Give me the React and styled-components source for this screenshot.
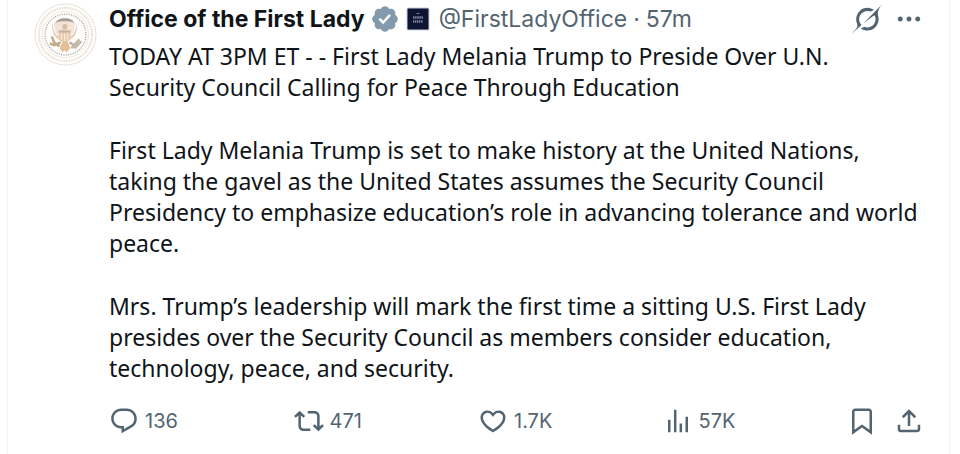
import React from 'react';
import styled, { createGlobalStyle } from 'styled-components';

const paragraphs = [
  'TODAY AT 3PM ET - - First Lady Melania Trump to Preside Over U.N. Security Council Calling for Peace Through Education',
  'First Lady Melania Trump is set to make history at the United Nations, taking the gavel as the United States assumes the Security Council Presidency to emphasize education’s role in advancing tolerance and world peace.',
  'Mrs. Trump’s leadership will mark the first time a sitting U.S. First Lady presides over the Security Council as members consider education, technology, peace, and security.'
];

const icons = {
  reply:
    'M1.751 10c0-4.42 3.584-8 8.005-8h4.366c4.49 0 8.129 3.64 8.129 8.13 0 2.96-1.607 5.68-4.196 7.11l-8.054 4.46v-3.69h-.067c-4.49.1-8.183-3.51-8.183-8.01zm8.005-6c-3.317 0-6.005 2.69-6.005 6 0 3.37 2.77 6.08 6.138 6.01l.351-.01h1.761v2.3l5.087-2.81c1.951-1.08 3.163-3.13 3.163-5.36 0-3.39-2.744-6.13-6.129-6.13H9.756z',
  repost:
    'M4.5 3.88l4.432 4.14-1.364 1.46L5.5 7.55V16c0 1.1.896 2 2 2H13v2H7.5c-2.209 0-4-1.79-4-4V7.55L1.432 9.48.068 8.02 4.5 3.88zM16.5 6H11V4h5.5c2.209 0 4 1.79 4 4v8.45l2.068-1.93 1.364 1.46-4.432 4.14-4.432-4.14 1.364-1.46 2.068 1.93V8c0-1.1-.896-2-2-2z',
  like:
    'M16.697 5.5c-1.222-.06-2.679.51-3.89 2.16l-.805 1.09-.806-1.09C9.984 6.01 8.526 5.44 7.304 5.5c-1.243.07-2.349.78-2.91 1.91-.552 1.12-.633 2.78.479 4.82 1.074 1.97 3.257 4.27 7.129 6.61 3.87-2.34 6.052-4.64 7.126-6.61 1.111-2.04 1.03-3.7.477-4.82-.561-1.13-1.666-1.84-2.908-1.91zm4.187 7.69c-1.351 2.48-4.001 5.12-8.379 7.67l-.503.3-.504-.3c-4.379-2.55-7.029-5.19-8.382-7.67-1.36-2.5-1.41-4.86-.514-6.67.887-1.79 2.647-2.91 4.601-3.01 1.651-.09 3.368.56 4.798 2.01 1.429-1.45 3.146-2.1 4.796-2.01 1.954.1 3.714 1.22 4.601 3.01.896 1.81.846 4.17-.514 6.67z',
  views:
    'M8.75 21V3h2v18h-2zM18 21V8.5h2V21h-2zM4 21l.004-10h2L6 21H4zm9.248 0v-7h2v7h-2z',
  bookmark:
    'M4 4.5C4 3.12 5.119 2 6.5 2h11C18.881 2 20 3.12 20 4.5v18.44l-8-5.71-8 5.71V4.5zM6.5 4c-.276 0-.5.22-.5.5v14.56l6-4.29 6 4.29V4.5c0-.28-.224-.5-.5-.5h-11z',
  share:
    'M12 2.59l5.7 5.7-1.41 1.42L13 6.41V16h-2V6.41l-3.3 3.3-1.41-1.42L12 2.59zM21 15l-.02 3.51c0 1.38-1.12 2.49-2.5 2.49H5.5C4.11 21 3 19.88 3 18.5V15h2v3.5c0 .28.22.5.5.5h12.98c.28 0 .5-.22.5-.5L19 15h2z',
  more:
    'M3 12c0-1.1.9-2 2-2s2 .9 2 2-.9 2-2 2-2-.9-2-2zm9 2c1.1 0 2-.9 2-2s-.9-2-2-2-2 .9-2 2 .9 2 2 2zm7 0c1.1 0 2-.9 2-2s-.9-2-2-2-2 .9-2 2 .9 2 2 2z'
};

const stats = [
  { icon: 'reply', label: 'Reply', count: '136' },
  { icon: 'repost', label: 'Repost', count: '471' },
  { icon: 'like', label: 'Like', count: '1.7K' },
  { icon: 'views', label: 'Views', count: '57K' }
];

const Icon = ({ name }) => (
  <IconSvg viewBox='0 0 24 24' aria-hidden='true'>
    <path d={icons[name]} />
  </IconSvg>
);

const GrokIcon = () => (
  <IconSvg viewBox='0 0 33 32' aria-hidden='true'>
    <path d='M12.745 20.54l10.97-8.19c.539-.4 1.307-.244 1.564.38 1.349 3.288.746 7.241-1.938 9.955-2.683 2.714-6.417 3.31-9.83 1.954l-3.728 1.745c5.347 3.697 11.84 2.782 15.898-1.324 3.219-3.255 4.216-7.692 3.284-11.693l.008.009c-1.351-5.878.332-8.227 3.782-13.031L33 0l-4.54 4.59v-.014L12.743 20.544m-2.263 1.987c-3.837-3.707-3.175-9.446.1-12.755 2.42-2.449 6.388-3.448 9.852-1.979l3.72-1.737c-.67-.49-1.53-1.017-2.515-1.387-4.455-1.854-9.789-.931-13.41 2.728-3.483 3.523-4.579 8.94-2.697 13.561 1.405 3.454-.899 5.898-3.22 8.364C1.49 30.2.666 31.074 0 32l10.478-9.466' />
  </IconSvg>
);

const VerifiedBadge = () => (
  <BadgeSvg viewBox='0 0 22 22' role='img' aria-label='Verified account'>
    <path d='M20.396 11c-.018-.646-.215-1.275-.57-1.816-.354-.54-.852-.972-1.438-1.246.223-.607.27-1.264.14-1.897-.131-.634-.437-1.218-.882-1.687-.47-.445-1.053-.75-1.687-.882-.633-.13-1.29-.083-1.897.14-.273-.587-.704-1.086-1.245-1.44S11.647 1.62 11 1.604c-.646.017-1.273.213-1.813.568s-.969.854-1.24 1.44c-.608-.223-1.267-.272-1.902-.14-.635.13-1.22.436-1.69.882-.445.47-.749 1.055-.878 1.688-.13.633-.08 1.29.144 1.896-.587.274-1.087.705-1.443 1.245-.356.54-.555 1.17-.574 1.817.02.647.218 1.276.574 1.817.356.54.856.972 1.443 1.245-.224.606-.274 1.263-.144 1.896.13.634.433 1.218.877 1.688.47.443 1.054.747 1.687.878.633.132 1.29.084 1.897-.136.274.586.705 1.084 1.246 1.439.54.354 1.17.551 1.816.569.647-.016 1.276-.213 1.817-.567s.972-.854 1.245-1.44c.604.239 1.266.296 1.903.164.636-.132 1.22-.447 1.68-.907.46-.46.776-1.044.908-1.681s.075-1.299-.165-1.903c.586-.274 1.084-.705 1.439-1.246.354-.54.551-1.17.569-1.816zM9.662 14.85l-3.429-3.428 1.293-1.302 2.072 2.072 4.4-4.794 1.347 1.246z' />
  </BadgeSvg>
);

const AffiliateBadge = () => (
  <AffiliateSvg viewBox='0 0 24 24' role='img' aria-label='The White House'>
    <rect x='1' y='1' width='22' height='22' rx='1' fill='#0d1533' stroke='#c9cfdb' />
    <g stroke='#7d8399' fill='none'>
      <path d='M10.5 6.5h3' strokeWidth='1' />
      <path d='M7 10.5h10' strokeWidth='2.5' strokeDasharray='1.5 .6' />
      <path d='M7 14.5h10' strokeWidth='2.5' strokeDasharray='1.3 .6' />
    </g>
  </AffiliateSvg>
);

const Seal = () => (
  <SealSvg viewBox='0 0 64 64' role='img' aria-label='Seal'>
    <circle cx='32' cy='32' r='31' fill='#fffefc' stroke='#dcd8d2' strokeWidth='.8' />
    <g fill='none'>
      <circle cx='32' cy='32' r='27' stroke='#e6dccf' strokeWidth='2.2' strokeDasharray='1.4 1.1' />
      <circle cx='32' cy='32' r='23.5' stroke='#e4ded5' strokeWidth='.7' />
      <circle cx='32' cy='32' r='20.8' stroke='#aaa49c' strokeWidth='1.4' strokeDasharray='1.1 1.3' />
    </g>
    {/* wings and clouds */}
    <path d='M19 20c0 8 2 13 9 15l-1 3c-7-3-10-10-8-18zM43 20c0 8-2 13-9 15l1 3c7-3 10-10 8-18z' fill='#e3cdb8' />
    <path d='M20 21c1-3 5-4 11-4s10 1 11 4l-2 9-5 5h-8l-5-5z' fill='#f1e4d8' />
    <path d='M22 20c3-6 16-6 19 0-5-2-14-2-19 0z' fill='#a39a96' />
    {/* head, shield and tail */}
    <path d='M29 22l3-1 2 2-1 4h-4z' fill='#d9bc9b' />
    <path d='M25 28h12v6c0 4-3 6-6 7-3-1-6-3-6-7z' fill='#eacdb0' />
    <path d='M25 28h12v2H25z' fill='#c5b1a2' />
    <path d='M28 31v6M31 31v8M34 31v6' stroke='#f8eee3' strokeWidth='1' />
    <path d='M29 39h5l3 7-4 4-2-2-2 2-3-4z' fill='#e2bf98' />
    {/* branch and arrows */}
    <path d='M27 40l-7 3M18 34l3 7 5 3M16 41l5 2' fill='none' stroke='#c6a887' strokeWidth='2.5' />
    <path d='M36 40l5 3M38 46l8-9M41 46l7-7' fill='none' stroke='#c4b5a6' strokeWidth='2.5' />
  </SealSvg>
);

const App = () => {
  return (
    <>
      <GlobalStyle />
      <Post>
        <AvatarLink href='#profile'>
          <Seal />
        </AvatarLink>
        <Content>
          <Header>
            <NameLink href='#profile'>Office of the First Lady</NameLink>
            <VerifiedBadge />
            <AffiliateBadge />
            <Meta>
              <MetaLink href='#profile'>@FirstLadyOffice</MetaLink>
              <span>·</span>
              <MetaLink href='#status'>
                <time>57m</time>
              </MetaLink>
            </Meta>
            <HeaderActions>
              <IconButton aria-label='Grok'>
                <GrokIcon />
              </IconButton>
              <IconButton aria-label='More'>
                <Icon name='more' />
              </IconButton>
            </HeaderActions>
          </Header>
          <Body>
            {paragraphs.map((text) => (
              <Paragraph key={text}>{text}</Paragraph>
            ))}
          </Body>
          <ActionBar>
            {stats.map(({ icon, label, count }) => (
              <StatButton key={icon} aria-label={`${count} ${label}`}>
                <Icon name={icon} />
                {count}
              </StatButton>
            ))}
            <EndActions>
              <IconButton aria-label='Bookmark'>
                <Icon name='bookmark' />
              </IconButton>
              <IconButton aria-label='Share'>
                <Icon name='share' />
              </IconButton>
            </EndActions>
          </ActionBar>
        </Content>
      </Post>
    </>
  );
};

export default App;

const GlobalStyle = createGlobalStyle`
  * {
    box-sizing: border-box;
  }

  body {
    margin: 0;
    background-color: #ffffff;
    color: #0f1419;
    font-family: Inter, 'Liberation Sans', sans-serif;
    font-size: 23px;
  }

  a {
    color: inherit;
    text-decoration: none;
  }
`;

const Post = styled.article`
  display: flex;
  gap: 12px;
  min-height: 100vh;
  margin: 0 10px 0 7px;
  padding: 3px 25px 0 26px;
  border: solid #eff3f4;
  border-width: 0 1px;
`;

const AvatarLink = styled.a`
  flex-shrink: 0;
`;

const SealSvg = styled.svg`
  display: block;
  width: 63px;
  height: 63px;
`;

const Content = styled.div`
  flex: 1;
  min-width: 0;
`;

const Header = styled.header`
  display: flex;
  align-items: center;
  height: 32px;
`;

const NameLink = styled.a`
  font-weight: 700;
  white-space: nowrap;
`;

const BadgeSvg = styled.svg`
  flex-shrink: 0;
  width: 30px;
  height: 30px;
  margin-left: 5px;
  fill: #829aab;
`;

const AffiliateSvg = styled.svg`
  flex-shrink: 0;
  width: 24px;
  height: 24px;
  margin-left: 6px;
`;

const Meta = styled.div`
  display: flex;
  gap: 6px;
  margin-left: 9px;
  color: #536471;
  white-space: nowrap;
`;

const MetaLink = styled.a`
  color: inherit;
`;

const HeaderActions = styled.div`
  display: flex;
  gap: 12px;
  margin-left: auto;
`;

const IconButton = styled.button`
  display: flex;
  align-items: center;
  padding: 0;
  border: none;
  background: none;
  color: #536471;
  font-family: inherit;
  cursor: pointer;
`;

const IconSvg = styled.svg`
  display: block;
  flex-shrink: 0;
  width: 30px;
  height: 30px;
  fill: currentColor;
`;

const Body = styled.div`
  display: flex;
  flex-direction: column;
  gap: 32px;
  margin-top: 6px;
  padding-right: 4px;
  font-family: 'Noto Sans', sans-serif;
`;

const Paragraph = styled.p`
  margin: 0;
  line-height: 31px;
`;

const ActionBar = styled.div`
  display: grid;
  grid-template-columns: repeat(4, 1fr) auto;
  align-items: center;
  margin-top: 22px;
`;

const StatButton = styled(IconButton)`
  gap: 6px;
  font-size: 20px;
`;

const EndActions = styled.div`
  display: flex;
  gap: 17px;
`;
